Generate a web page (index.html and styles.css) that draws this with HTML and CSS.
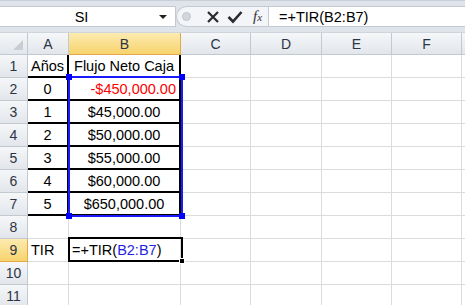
FILE: index.html
```html
<!DOCTYPE html>
<html>
<head>
<meta charset="UTF-8">
<title>TIR</title>
<link rel="stylesheet" href="styles.css">
</head>
<body>
<div class="app">

  <div class="fbar">
    <div class="namebox">
      <span class="name">SI</span>
      <span class="drop"></span>
    </div>
    <div class="tools">
      <span class="grip"></span>
      <svg class="ico" width="14" height="14" viewBox="0 0 14 14"><path d="M2 2 L12 12 M12 2 L2 12" stroke="#2b2b2b" stroke-width="2.2" fill="none"/></svg>
      <svg class="ico" width="16" height="14" viewBox="0 0 16 14"><path d="M1.5 7 L6 11.5 L14.5 2" stroke="#2b2b2b" stroke-width="2.6" fill="none"/></svg>
      <span class="fx">f<span class="fx-x">x</span></span>
    </div>
    <div class="formula">=+TIR(B2:B7)</div>
  </div>

  <div class="sheet">
    <!-- column headers -->
    <div class="h corner"><svg width="12" height="12" viewBox="0 0 12 12"><path d="M11 1 L11 11 L1 11 Z" fill="#c9cdd3"/></svg></div>
    <div class="h">A</div>
    <div class="h sel">B</div>
    <div class="h">C</div>
    <div class="h">D</div>
    <div class="h">E</div>
    <div class="h">F</div>
    <div class="h"></div>

    <!-- row 1 -->
    <div class="h rh">1</div>
    <div class="c bx ctr">Años</div>
    <div class="c bx ctr">Flujo Neto Caja</div>
    <div class="c"></div><div class="c"></div><div class="c"></div><div class="c"></div><div class="c"></div>

    <!-- row 2 -->
    <div class="h rh">2</div>
    <div class="c bx ctr">0</div>
    <div class="c bx rt neg">-$450,000.00</div>
    <div class="c"></div><div class="c"></div><div class="c"></div><div class="c"></div><div class="c"></div>

    <!-- row 3 -->
    <div class="h rh">3</div>
    <div class="c bx ctr">1</div>
    <div class="c bx ctr">$45,000.00</div>
    <div class="c"></div><div class="c"></div><div class="c"></div><div class="c"></div><div class="c"></div>

    <!-- row 4 -->
    <div class="h rh">4</div>
    <div class="c bx ctr">2</div>
    <div class="c bx ctr">$50,000.00</div>
    <div class="c"></div><div class="c"></div><div class="c"></div><div class="c"></div><div class="c"></div>

    <!-- row 5 -->
    <div class="h rh">5</div>
    <div class="c bx ctr">3</div>
    <div class="c bx ctr">$55,000.00</div>
    <div class="c"></div><div class="c"></div><div class="c"></div><div class="c"></div><div class="c"></div>

    <!-- row 6 -->
    <div class="h rh">6</div>
    <div class="c bx ctr">4</div>
    <div class="c bx ctr">$60,000.00</div>
    <div class="c"></div><div class="c"></div><div class="c"></div><div class="c"></div><div class="c"></div>

    <!-- row 7 -->
    <div class="h rh">7</div>
    <div class="c bx ctr">5</div>
    <div class="c bx ctr">$650,000.00</div>
    <div class="c"></div><div class="c"></div><div class="c"></div><div class="c"></div><div class="c"></div>

    <!-- row 8 -->
    <div class="h rh">8</div>
    <div class="c"></div><div class="c"></div>
    <div class="c"></div><div class="c"></div><div class="c"></div><div class="c"></div><div class="c"></div>

    <!-- row 9 -->
    <div class="h rh sel">9</div>
    <div class="c">TIR</div>
    <div class="c edit">=+TIR(<span class="ref">B2:B7</span>)</div>
    <div class="c"></div><div class="c"></div><div class="c"></div><div class="c"></div><div class="c"></div>

    <!-- row 10 -->
    <div class="h rh">10</div>
    <div class="c"></div><div class="c"></div>
    <div class="c"></div><div class="c"></div><div class="c"></div><div class="c"></div><div class="c"></div>

    <!-- row 11 -->
    <div class="h rh">11</div>
    <div class="c"></div><div class="c"></div>
    <div class="c"></div><div class="c"></div><div class="c"></div><div class="c"></div><div class="c"></div>

    <!-- range B2:B7 highlighted by the formula -->
    <div class="range">
      <span class="knob tl"></span><span class="knob tr"></span>
      <span class="knob bl"></span><span class="knob br"></span>
    </div>
    <!-- active cell B9 -->
    <div class="active"><span class="handle"></span></div>
  </div>

</div>
</body>
</html>
```

FILE: styles.css
```css
* {
    box-sizing: border-box;
}

body {
    margin: 0;
    background: #fff;
    font-family: "Liberation Sans", Arial, sans-serif;
    font-size: 14.5px;
    color: #000;
}

.app {
    width: 465px;
    height: 305px;
    overflow: hidden;
}

/* formula bar */

.fbar {
    display: flex;
    height: 33px;
    padding: 5px 0 5px 0;
    background: #dfe4ea;
    border-top: 1px solid #c9cfd8;
    border-bottom: 1px solid #cfd5dd;
}

.namebox {
    width: 176px;
    display: flex;
    align-items: center;
    background: #fff;
    border: 1px solid #c4cad3;
    border-left: none;
}

.name {
    flex: 1;
    text-align: center;
    padding-left: 4px;
}

.drop {
    width: 0;
    height: 0;
    margin-right: 8px;
    border-left: 4px solid transparent;
    border-right: 4px solid transparent;
    border-top: 4px solid #222;
}

.tools {
    width: 92px;
    display: flex;
    align-items: center;
    gap: 7px;
    padding-left: 5px;
    background: #f3f5f8;
    border: 1px solid #c4cad3;
    border-right: none;
    border-radius: 12px 0 0 12px;
}

.grip {
    width: 9px;
    height: 9px;
    margin-right: 8px;
    border-radius: 50%;
    background: #d3d7dd;
    border: 1px solid #c2c7ce;
}

.ico {
    display: block;
}

.fx {
    font-family: "Liberation Serif", serif;
    font-style: italic;
    font-size: 15px;
    color: #333;
    margin-left: 3px;
}

.fx-x {
    font-size: 11px;
}

.formula {
    flex: 1;
    display: flex;
    align-items: center;
    padding-left: 10px;
    background: #fff;
    border: 1px solid #c4cad3;
    border-right: none;
}

/* sheet */

.sheet {
    position: relative;
    display: grid;
    grid-template-columns: 28px 41px 112px 70px 71px 70px 70px 1fr;
    grid-template-rows: 22px repeat(11, 23px);
}

.h {
    display: flex;
    align-items: center;
    justify-content: center;
    background: linear-gradient(#f5f7f9, #e2e6eb);
    border-right: 1px solid #c3c9d1;
    border-bottom: 1px solid #c3c9d1;
    color: #2c3544;
    font-size: 14px;
}

.h.sel {
    background: linear-gradient(#fcebb0, #f7d36d);
    border-color: #e2a94a;
}

.corner {
    justify-content: flex-end;
    align-items: flex-end;
    padding: 0 3px 3px 0;
}

.c {
    display: flex;
    align-items: center;
    padding: 0 3px;
    white-space: nowrap;
    border-right: 1px solid #dadcdd;
    border-bottom: 1px solid #dadcdd;
}

.ctr {
    justify-content: center;
}

.rt {
    justify-content: flex-end;
}

.bx {
    border-right: 2px solid #000;
    border-bottom: 2px solid #000;
}

.neg {
    color: #ff0000;
}

.edit {
    overflow: visible;
    padding-left: 3px;
}

.ref {
    color: #1f1fe0;
}

.range {
    position: absolute;
    left: 68px;
    top: 43px;
    width: 115px;
    height: 141px;
    border: 2px solid #1a1aff;
}

.knob {
    position: absolute;
    width: 6px;
    height: 6px;
    background: #0000ff;
}

.knob.tl { left: -4px; top: -4px; }
.knob.tr { right: -4px; top: -4px; }
.knob.bl { left: -4px; bottom: -4px; }
.knob.br { right: -4px; bottom: -4px; }

.active {
    position: absolute;
    left: 68px;
    top: 204px;
    width: 115px;
    height: 25px;
    border: 2px solid #000;
}

.handle {
    position: absolute;
    right: -4px;
    bottom: -4px;
    width: 6px;
    height: 6px;
    background: #000;
    border: 1px solid #fff;
}
```
